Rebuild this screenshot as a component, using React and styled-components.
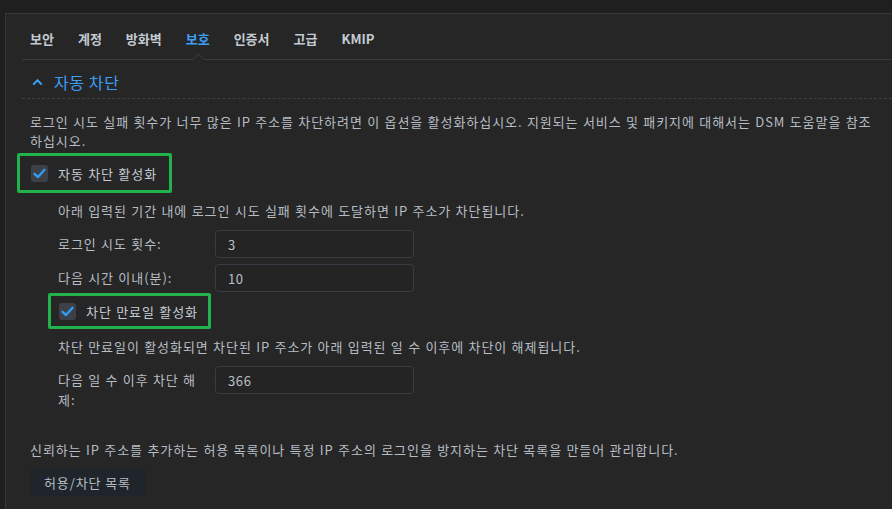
import React from "react";
import styled, { createGlobalStyle } from "styled-components";

const Global = createGlobalStyle`
  html, body { margin: 0; padding: 0; background: #1f1f1f; }
  body { font-family: "Noto Sans CJK KR", "Noto Sans", sans-serif; }
  * { box-sizing: border-box; }
`;

const Frame = styled.div`
  width: 892px;
  height: 509px;
  padding: 13px 0 0 5px;
  background: #1f1f1f;
  overflow: hidden;
`;

const Panel = styled.div`
  height: 100%;
  background: #262626;
  border-top: 1px solid #34383c;
  border-left: 1px solid #34383c;
  padding: 0 0 0 16px;
`;

const TabBar = styled.div`
  display: flex;
  height: 46px;
  border-bottom: 1px solid #343b42;
  padding-left: 8px;
  align-items: center;
`;

const Tab = styled.div`
  position: relative;
  height: 100%;
  display: flex;
  align-items: center;
  margin-right: 24px;
  font-size: 13px;
  font-weight: 700;
  color: ${(p) => (p.$active ? "#3c9ff5" : "#c4cbd2")};
  padding-top: 4px;
  &::after {
    content: "";
    display: ${(p) => (p.$active ? "block" : "none")};
    position: absolute;
    left: 50%;
    bottom: -5px;
    width: 8px;
    height: 8px;
    margin-left: -4px;
    background: #262626;
    border-top: 1px solid #343b42;
    border-left: 1px solid #343b42;
    transform: rotate(45deg);
  }
`;

const SectionHead = styled.div`
  display: flex;
  align-items: center;
  height: 39px;
  padding: 6px 0 0 10px;
  gap: 11px;
  color: #3c9ff5;
  font-size: 16px;
  letter-spacing: 0.6px;
  border-bottom: 1px dashed #3a4148;
`;

const Desc = styled.p`
  margin: ${(p) => p.$m || "0"};
  font-size: 13px;
  line-height: 19px;
  color: #b6bdc4;
  letter-spacing: 0.95px;
  word-spacing: 0.5px;
`;

const Body = styled.div`
  padding: 13px 14px 0 8px;
`;

const Highlight = styled.div`
  display: flex;
  width: fit-content;
  align-items: center;
  border: 3px solid #22b24c;
  border-radius: 2px;
  height: ${(p) => p.$h};
  margin: ${(p) => p.$m};
  padding: 0 ${(p) => p.$pr} 0 ${(p) => p.$pl};
  gap: 10px;
  font-size: 13px;
  color: #c4cbd2;
  letter-spacing: 0.95px;
  word-spacing: 0.5px;
`;

const Check = styled.span`
  width: 17px;
  height: 17px;
  border-radius: 3px;
  background: #3d4147;
  display: flex;
  align-items: center;
  justify-content: center;
`;

const Indent = styled.div`
  padding-left: 28px;
`;

const Row = styled.div`
  display: flex;
  align-items: flex-start;
  margin-top: ${(p) => p.$mt || "6px"};
`;

const Label = styled.div`
  width: 157px;
  padding-right: 12px;
  font-size: 13px;
  line-height: 20px;
  color: #b6bdc4;
  padding-top: 4px;
  letter-spacing: 0.95px;
  word-spacing: 0.5px;
`;

const Input = styled.div`
  width: 199px;
  height: 28px;
  border: 1px solid #363d44;
  border-radius: 4px;
  background: #242424;
  font-size: 13px;
  color: #b9c0c7;
  letter-spacing: 0.6px;
  display: flex;
  align-items: center;
  padding-left: 12px;
`;

const Button = styled.div`
  display: inline-flex;
  align-items: center;
  height: 27px;
  padding: 0 15px 0 14px;
  background: #1f252b;
  border-radius: 3px;
  font-size: 13px;
  color: #b6bdc4;
  letter-spacing: 0.9px;
  margin-top: 10px;
`;

const CheckIcon = () => (
  <svg width="13" height="11" viewBox="0 0 13 11">
    <path d="M1.5 5.8 L5 9 L11.5 1.8" fill="none" stroke="#2f9cf6" strokeWidth="2.4" strokeLinecap="round" strokeLinejoin="round" />
  </svg>
);

const Chevron = () => (
  <svg width="11" height="8" viewBox="0 0 11 8">
    <path d="M1.2 6.6 L5.5 2.2 L9.8 6.6" fill="none" stroke="#3c9ff5" strokeWidth="2" />
  </svg>
);

const tabs = ["보안", "계정", "방화벽", "보호", "인증서", "고급", "KMIP"];

export default function App() {
  return (
    <Frame>
      <Global />
      <Panel>
        <TabBar>
          {tabs.map((t) => (
            <Tab key={t} $active={t === "보호"}>{t}</Tab>
          ))}
        </TabBar>
        <SectionHead>
          <Chevron />
          <span>자동 차단</span>
        </SectionHead>
        <Body>
          <Desc>
            로그인 시도 실패 횟수가 너무 많은 IP 주소를 차단하려면 이 옵션을 활성화하십시오. 지원되는 서비스 및 패키지에 대해서는 DSM 도움말을 참조하십시오.
          </Desc>
          <Highlight $h="40px" $m="3px 0 0 -13px" $pl="11px" $pr="12px">
            <Check><CheckIcon /></Check>
            자동 차단 활성화
          </Highlight>
          <Indent>
            <Desc $m="8px 0 0 0">아래 입력된 기간 내에 로그인 시도 실패 횟수에 도달하면 IP 주소가 차단됩니다.</Desc>
            <Row $mt="10px">
              <Label>로그인 시도 횟수:</Label>
              <Input>3</Input>
            </Row>
            <Row $mt="6px">
              <Label>다음 시간 이내(분):</Label>
              <Input>10</Input>
            </Row>
            <Highlight $h="36px" $m="1px 0 0 -10px" $pl="8px" $pr="10px">
              <Check><CheckIcon /></Check>
              차단 만료일 활성화
            </Highlight>
            <Desc $m="8px 0 0 0">차단 만료일이 활성화되면 차단된 IP 주소가 아래 입력된 일 수 이후에 차단이 해제됩니다.</Desc>
            <Row $mt="10px">
              <Label>다음 일 수 이후 차단 해제:</Label>
              <Input>366</Input>
            </Row>
          </Indent>
          <Desc $m="30px 0 0 0">신뢰하는 IP 주소를 추가하는 허용 목록이나 특정 IP 주소의 로그인을 방지하는 차단 목록을 만들어 관리합니다.</Desc>
          <Button>허용/차단 목록</Button>
        </Body>
      </Panel>
    </Frame>
  );
}
